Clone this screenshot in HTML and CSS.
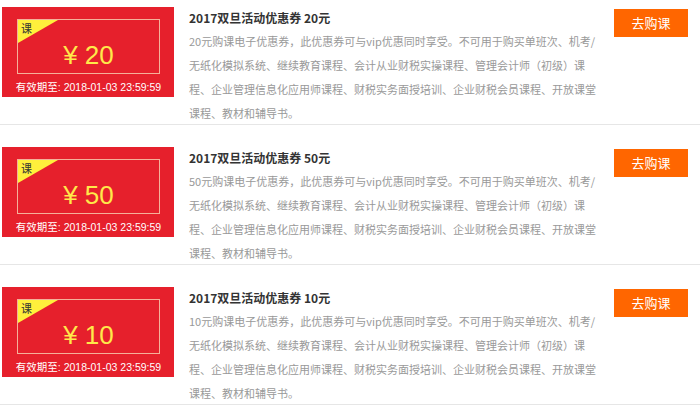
FILE: index.html
```html
<!DOCTYPE html>
<html lang="zh-CN">
<head>
    <meta charset="UTF-8">
    <meta name="viewport" content="width=device-width, initial-scale=1.0">
    <title>优惠券</title>
    <link rel="stylesheet" href="styles.css">
</head>
<body>

    <ul class="coupon-list">
        <li class="coupon-item">
            <div class="coupon">
                <div class="coupon-box">
                    <span class="coupon-tag">课</span>
                    <span class="coupon-amount">¥ 20</span>
                </div>
                <p class="coupon-date">有效期至: 2018-01-03 23:59:59</p>
            </div>
            <div class="coupon-info">
                <h3>2017双旦活动优惠券 20元</h3>
                <p>20元购课电子优惠券，此优惠券可与vip优惠同时享受。不可用于购买单班次、机考/无纸化模拟系统、继续教育课程、会计从业财税实操课程、管理会计师（初级）课程、企业管理信息化应用师课程、财税实务面授培训、企业财税会员课程、开放课堂课程、教材和辅导书。</p>
            </div>
            <a class="buy-btn" href="#">去购课</a>
        </li>
        <li class="coupon-item">
            <div class="coupon">
                <div class="coupon-box">
                    <span class="coupon-tag">课</span>
                    <span class="coupon-amount">¥ 50</span>
                </div>
                <p class="coupon-date">有效期至: 2018-01-03 23:59:59</p>
            </div>
            <div class="coupon-info">
                <h3>2017双旦活动优惠券 50元</h3>
                <p>50元购课电子优惠券，此优惠券可与vip优惠同时享受。不可用于购买单班次、机考/无纸化模拟系统、继续教育课程、会计从业财税实操课程、管理会计师（初级）课程、企业管理信息化应用师课程、财税实务面授培训、企业财税会员课程、开放课堂课程、教材和辅导书。</p>
            </div>
            <a class="buy-btn" href="#">去购课</a>
        </li>
        <li class="coupon-item">
            <div class="coupon">
                <div class="coupon-box">
                    <span class="coupon-tag">课</span>
                    <span class="coupon-amount">¥ 10</span>
                </div>
                <p class="coupon-date">有效期至: 2018-01-03 23:59:59</p>
            </div>
            <div class="coupon-info">
                <h3>2017双旦活动优惠券 10元</h3>
                <p>10元购课电子优惠券，此优惠券可与vip优惠同时享受。不可用于购买单班次、机考/无纸化模拟系统、继续教育课程、会计从业财税实操课程、管理会计师（初级）课程、企业管理信息化应用师课程、财税实务面授培训、企业财税会员课程、开放课堂课程、教材和辅导书。</p>
            </div>
            <a class="buy-btn" href="#">去购课</a>
        </li>
    </ul>

</body>
</html>
```

FILE: styles.css
```css
body {
    margin: 0;
    background-color: #fff;
    font-family: "Noto Sans CJK SC", "Liberation Sans", sans-serif;
    overflow: hidden;
}
.coupon-list {
    list-style: none;
    margin: -15px 0 0 0;
    padding: 0;
}
.coupon-item {
    display: flex;
    align-items: flex-start;
    height: 139px;
    border-bottom: 1px solid #e6e6e6;
}
.coupon {
    width: 172px;
    height: 90px;
    margin: 22px 0 0 2px;
    padding: 12px 14px 0 15px;
    box-sizing: border-box;
    background-color: #e6202c;
}
.coupon-box {
    position: relative;
    height: 55px;
    border: 1px solid #f5b09a;
    box-sizing: border-box;
    display: flex;
    align-items: center;
    justify-content: center;
}
.coupon-box::before {
    content: "";
    position: absolute;
    left: 0;
    top: 0;
    border-top: 23px solid #fff03c;
    border-right: 40px solid transparent;
}
.coupon-tag {
    position: absolute;
    left: 3px;
    top: 1px;
    font-size: 11px;
    line-height: 14px;
    color: #333;
}
.coupon-amount {
    margin-top: 16px;
    font-family: "Liberation Sans", sans-serif;
    font-size: 26px;
    line-height: 30px;
    color: #ffe94a;
}
.coupon-date {
    margin: 5px -10px 0 -10px;
    text-align: center;
    font-family: "Liberation Sans", "Noto Sans CJK SC", sans-serif;
    font-size: 10.5px;
    line-height: 16px;
    color: #fff;
    white-space: nowrap;
}
.coupon-info {
    width: 412px;
    margin: 24px 0 0 15px;
}
.coupon-info h3 {
    margin: 0;
    font-size: 12px;
    line-height: 18px;
    font-weight: bold;
    color: #333;
}
.coupon-info p {
    margin: 2px 0 0 0;
    font-size: 11px;
    line-height: 24px;
    color: #999;
}
.buy-btn {
    margin: 24px 12px 0 auto;
    width: 74px;
    height: 28px;
    line-height: 28px;
    text-align: center;
    background-color: #ff6600;
    color: #fff;
    font-size: 13px;
    text-decoration: none;
}
```
